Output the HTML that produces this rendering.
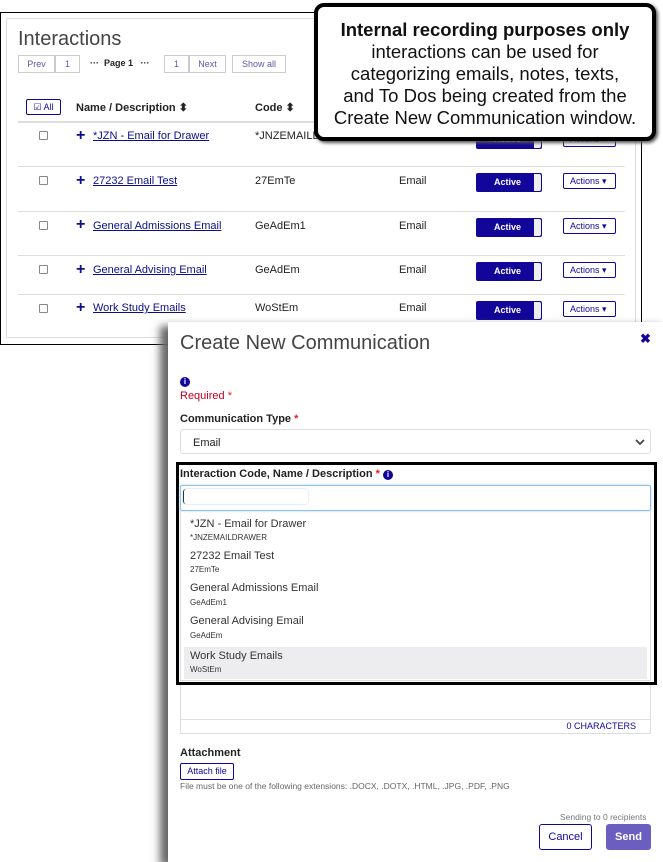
<!DOCTYPE html>
<html><head><meta charset="utf-8"><style>
*{box-sizing:border-box;margin:0;padding:0}
body{width:663px;height:858px;background:#fff;position:relative;overflow:hidden;font-family:"Liberation Sans",sans-serif;color:#222}
.a{position:absolute}
.outer{left:0;top:12px;width:642px;height:333px;border:1.5px solid #000;background:#fff}
.inner{left:6px;top:18px;width:630px;height:320px;border:1px solid #ddd}
.title{left:18px;top:28px;font-size:20px;color:#444;font-weight:300}
.pg{top:55px;height:18px;border:1px solid #ccc;font-size:9px;color:#5a5aa8;line-height:16px;text-align:center}
.sm{font-size:11px;color:#222}
.hdr{font-size:11px;font-weight:bold;color:#222}
.line{left:18px;width:607px;height:1px;background:#ddd}
.cb{width:9px;height:9px;border:1px solid #888;border-radius:1px;left:39px}
.plus{left:76px;font-size:16px;font-weight:bold;color:#0b0e8a;line-height:12px}
.lnk{left:93px;font-size:11px;color:#0b0e8a;text-decoration:underline}
.act{left:476px;width:66px;height:19px;background:#12069a;border-radius:2px;border:1px solid #12069a;color:#fff;font-size:9px;font-weight:bold;line-height:17px;padding-left:17px}
.act:after{content:"";position:absolute;right:0;top:0;width:7px;height:17px;background:#eee;border-radius:0 2px 2px 0}
.acts{left:563px;width:53px;height:16px;border:1px solid #12069a;border-radius:2px;font-size:9px;color:#12069a;line-height:14px;padding-left:6px}
.callout{left:314px;top:3px;width:342px;height:138px;border:4px solid #000;border-radius:10px;background:#fff;text-align:center;font-size:18.5px;line-height:22px;padding-top:12px;color:#111;box-shadow:2px 2px 3px #555}
.modal{left:168px;top:322px;width:500px;height:540px;background:#fff;box-shadow:-8px 4px 8px #666}
.lbl{font-size:11px;font-weight:bold;color:#222}
.item{left:190px;font-size:11px;color:#333}
.code{left:190px;font-size:8px;color:#333}
</style></head><body>
<div class="a outer"></div>
<div class="a inner"></div>
<div class="a title">Interactions</div>
<div class="a pg" style="left:18px;width:37px">Prev</div>
<div class="a pg" style="left:55px;width:25px">1</div>
<div class="a sm" style="left:90px;top:58px;font-size:9px;font-weight:bold">&middot;&middot;&middot;&nbsp; Page 1 &nbsp;&nbsp;&middot;&middot;&middot;</div>
<div class="a pg" style="left:164px;width:25px">1</div>
<div class="a pg" style="left:189px;width:37px">Next</div>
<div class="a pg" style="left:232px;width:54px">Show all</div>
<div class="a" style="left:26px;top:99px;width:35px;height:16px;border:1px solid #12069a;border-radius:2px;font-size:9px;color:#12069a;text-align:center;line-height:14px">☑ All</div>
<div class="a hdr" style="left:76px;top:101px">Name / Description ⬍</div>
<div class="a hdr" style="left:255px;top:101px">Code ⬍</div>
<div class="a line" style="top:121px;height:2px"></div>

<div class="a cb" style="top:131px"></div><div class="a plus" style="top:130px">+</div><div class="a lnk" style="top:130px">*JZN - Email for Drawer</div><div class="a sm" style="left:255px;top:130px">*JNZEMAILD</div>
<div class="a act" style="top:130px">Active</div><div class="a acts" style="top:131px">Actions ▾</div>
<div class="a line" style="top:166px"></div>
<div class="a cb" style="top:176px"></div><div class="a plus" style="top:175px">+</div><div class="a lnk" style="top:175px">27232 Email Test</div><div class="a sm" style="left:255px;top:175px">27EmTe</div><div class="a sm" style="left:399px;top:175px">Email</div>
<div class="a act" style="top:173px">Active</div><div class="a acts" style="top:173px">Actions ▾</div>
<div class="a line" style="top:211px"></div>
<div class="a cb" style="top:221px"></div><div class="a plus" style="top:219px">+</div><div class="a lnk" style="top:220px">General Admissions Email</div><div class="a sm" style="left:255px;top:220px">GeAdEm1</div><div class="a sm" style="left:399px;top:220px">Email</div>
<div class="a act" style="top:218px">Active</div><div class="a acts" style="top:218px">Actions ▾</div>
<div class="a line" style="top:255px"></div>
<div class="a cb" style="top:265px"></div><div class="a plus" style="top:264px">+</div><div class="a lnk" style="top:264px">General Advising Email</div><div class="a sm" style="left:255px;top:264px">GeAdEm</div><div class="a sm" style="left:399px;top:264px">Email</div>
<div class="a act" style="top:262px">Active</div><div class="a acts" style="top:262px">Actions ▾</div>
<div class="a line" style="top:294px"></div>
<div class="a cb" style="top:304px"></div><div class="a plus" style="top:302px">+</div><div class="a lnk" style="top:302px">Work Study Emails</div><div class="a sm" style="left:255px;top:302px">WoStEm</div><div class="a sm" style="left:399px;top:302px">Email</div>
<div class="a act" style="top:301px">Active</div><div class="a acts" style="top:301px">Actions ▾</div>

<div class="a callout"><b>Internal recording purposes only</b><br>interactions can be used for<br>categorizing emails, notes, texts,<br>and To Dos being created from the<br>Create New Communication window.</div>

<div class="a modal"></div>
<div class="a" style="left:180px;top:332px;font-size:20px;color:#444;font-weight:300">Create New Communication</div>
<div class="a" style="left:640px;top:331px;font-size:13px;font-weight:bold;color:#12069a">✖</div>
<div class="a" style="left:180px;top:377px;width:10px;height:10px;border-radius:50%;background:#12069a;color:#fff;font-size:8px;font-weight:bold;text-align:center;line-height:10px">i</div>
<div class="a" style="left:180px;top:390px;font-size:11px;color:#c00020">Required <span style="color:#d22">*</span></div>
<div class="a lbl" style="left:180px;top:413px">Communication Type <span style="color:#d22">*</span></div>
<div class="a" style="left:180px;top:429px;width:471px;height:25px;border:1px solid #ddd;border-radius:3px;font-size:11px;padding:7px 12px;color:#222">Email<svg style="position:absolute;right:5px;top:8px" width="10" height="8" viewBox="0 0 10 8"><path d="M1 2 L5 6 L9 2" stroke="#444" stroke-width="1.8" fill="none"/></svg></div>
<div class="a" style="left:180px;top:465px;width:471px;height:255px;border:1px solid #ddd"></div>
<div class="a" style="left:180px;top:719px;width:471px;height:15px;border:1px solid #ddd;border-top:none;font-size:9px;color:#12069a;text-align:right;padding-right:14px;line-height:14px">0 CHARACTERS</div>
<div class="a" style="left:176px;top:462px;width:481px;height:223px;border:3px solid #000;background:#fff"></div>
<div class="a lbl" style="left:180px;top:468px">Interaction Code, Name / Description <span style="color:#d22">*</span> <span style="display:inline-block;width:10px;height:10px;border-radius:50%;background:#12069a;color:#fff;font-size:8px;text-align:center;line-height:10px">i</span></div>
<div class="a" style="left:180px;top:485px;width:471px;height:26px;border:1px solid #8ec0ee;border-radius:2px;box-shadow:0 0 2px #a6d0f5"></div>
<div class="a" style="left:183px;top:489px;width:125px;height:15px;border-radius:3px;box-shadow:0 0 2px #bcd;border-left:1px solid #333"></div>
<div class="a" style="left:180px;top:511px;width:471px;height:170px;border:1px solid #ddd;border-top:none"></div>
<div class="a item" style="top:518px">*JZN - Email for Drawer</div><div class="a code" style="top:533px">*JNZEMAILDRAWER</div>
<div class="a item" style="top:550px">27232 Email Test</div><div class="a code" style="top:565px">27EmTe</div>
<div class="a item" style="top:582px">General Admissions Email</div><div class="a code" style="top:598px">GeAdEm1</div>
<div class="a item" style="top:615px">General Advising Email</div><div class="a code" style="top:631px">GeAdEm</div>
<div class="a" style="left:184px;top:647px;width:463px;height:32px;background:#ededef"></div>
<div class="a item" style="top:650px">Work Study Emails</div><div class="a code" style="top:665px">WoStEm</div>

<div class="a lbl" style="left:180px;top:747px">Attachment</div>
<div class="a" style="left:180px;top:763px;width:54px;height:17px;border:1px solid #12069a;border-radius:2px;font-size:9px;color:#12069a;text-align:center;line-height:15px">Attach file</div>
<div class="a" style="left:180px;top:781px;font-size:8.5px;color:#666">File must be one of the following extensions: .DOCX, .DOTX, .HTML, .JPG, .PDF, .PNG</div>
<div class="a" style="left:560px;top:812px;font-size:8.5px;color:#777">Sending to 0 recipients</div>
<div class="a" style="left:539px;top:824px;width:53px;height:26px;border:1px solid #12069a;border-radius:3px;font-size:11px;color:#12069a;text-align:center;line-height:24px">Cancel</div>
<div class="a" style="left:606px;top:824px;width:45px;height:26px;background:#6a5fc1;border-radius:3px;font-size:11px;color:#fff;font-weight:bold;text-align:center;line-height:26px">Send</div>
</body></html>
